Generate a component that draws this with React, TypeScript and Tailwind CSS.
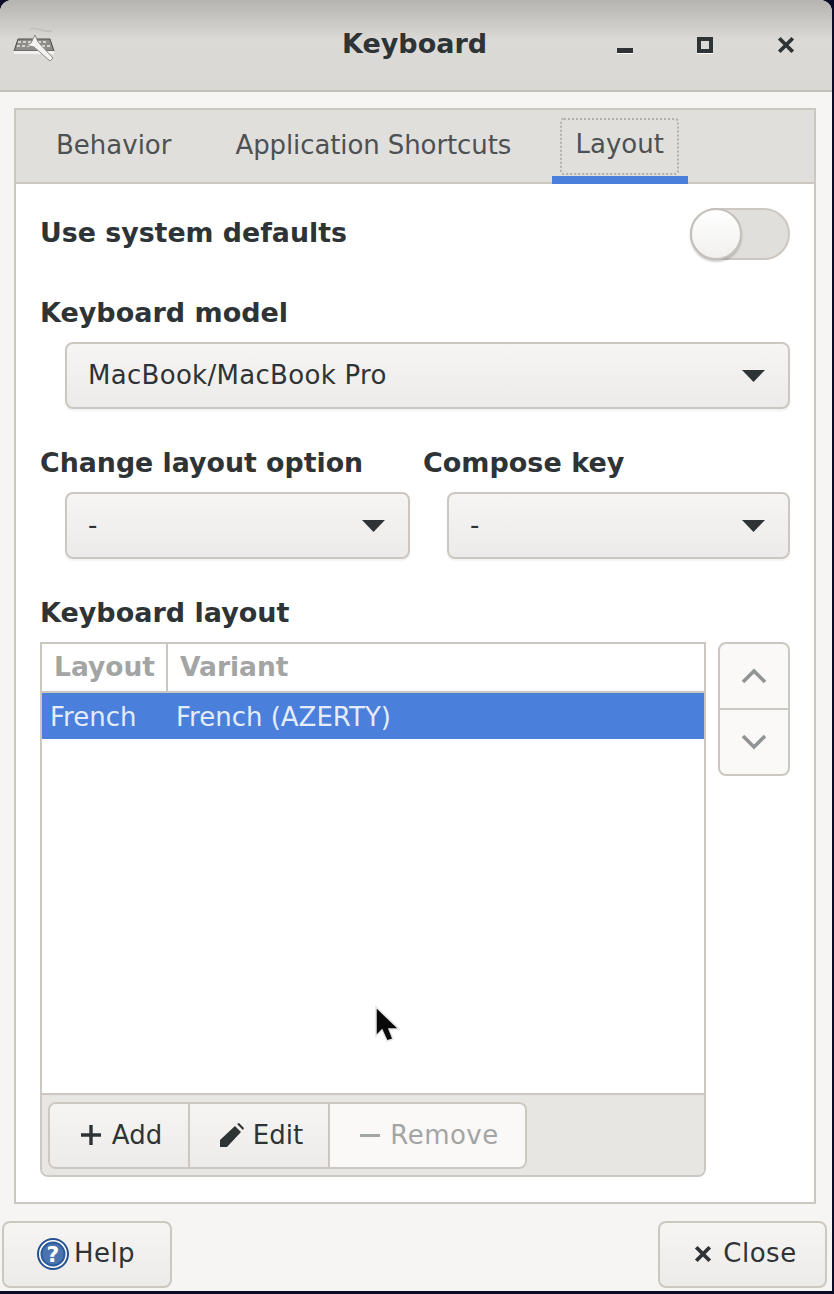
import React from 'react';

const font = { fontFamily: '"DejaVu Sans", sans-serif' };

const Caret: React.FC = () => (
  <svg width="23" height="12" viewBox="0 0 23 12" className="shrink-0">
    <path d="M0 0 H23 L11.5 12 Z" fill="#2e3436" />
  </svg>
);

const Combo: React.FC<{ label: string; className?: string }> = ({ label, className }) => (
  <div
    className={`flex h-[67px] items-center justify-between rounded-[8px] border-2 border-[#cdc7c2] bg-gradient-to-b from-[#f6f5f4] to-[#edebe9] pl-[21px] pr-[23px] shadow-[0_2px_2px_rgba(0,0,0,0.05)] ${className ?? ''}`}
  >
    <span className="text-[26px] tracking-[0.3px] text-[#2e3436]">{label}</span>
    <Caret />
  </div>
);

const KeyboardIcon: React.FC = () => (
  <svg width="44" height="40" viewBox="0 0 44 40" className="shrink-0">
    <path d="M18 4 C24 1 32 8 40 6" stroke="#c4c2be" strokeWidth="2" fill="none" />
    <path d="M6 14 H38 L42 26 H2 Z" fill="#8d8c88" stroke="#4e4e4b" strokeWidth="1" />
    <rect x="2" y="26" width="40" height="3" fill="#f2f1ef" />
    <path d="M6 17 H36 M5 21 H38" stroke="#d5d4d0" strokeWidth="2" strokeDasharray="3 2" />
    <path d="M23 10 L26 17 L41 33 L38 36 L22 22 L14 20 L19 18 Z" fill="#f4f3f1" stroke="#8a8985" strokeWidth="1" />
  </svg>
);

const HelpIcon: React.FC = () => (
  <svg width="32" height="32" viewBox="0 0 32 32" className="shrink-0">
    <circle cx="16" cy="16" r="15" fill="#fff" stroke="#26508f" strokeWidth="2" />
    <circle cx="16" cy="16" r="11.5" fill="#4a74b0" stroke="#2d5a9c" strokeWidth="2" />
    <text x="16" y="24" textAnchor="middle" fontSize="22" fontWeight="700" fill="#ffffff" fontFamily="DejaVu Sans">
      ?
    </text>
  </svg>
);

const CloseIcon: React.FC<{ size?: number }> = ({ size = 16 }) => (
  <svg width={size} height={size} viewBox="0 0 16 16" className="shrink-0">
    <path d="M2 2 L14 14 M14 2 L2 14" stroke="#2e3436" strokeWidth="3.4" />
  </svg>
);

const Tab: React.FC<{ label: string; className?: string }> = ({ label, className }) => (
  <span className={`text-[26px] text-[#4d5153] ${className ?? ''}`}>{label}</span>
);

const App: React.FC = () => {
  return (
    <div className="relative h-[1294px] w-[834px] overflow-hidden bg-[#0b0b26]" style={font}>
      <div className="flex h-[1291px] w-[832px] flex-col overflow-hidden rounded-t-[12px] bg-[#f6f5f4]">
        {/* Title bar */}
        <div className="flex h-[92px] shrink-0 items-center justify-between border-b-2 border-[#c4bfba] bg-gradient-to-b from-[#b5b4b0] via-[#dcdad7] via-[45%] to-[#dad8d4] pl-[12px]">
          <KeyboardIcon />
          <span className="absolute left-[342px] top-[24px] text-[27px] font-bold text-[#2e3436]">Keyboard</span>
          <div className="flex items-center gap-[64px] pr-[37px]">
            <span className="mt-[10px] h-[5px] w-[16px] bg-[#2e3436] shadow-[0_1px_0_#fff]" />
            <span className="h-[16px] w-[16px] border-[4px] border-[#2e3436] shadow-[0_1px_0_#fff]" />
            <CloseIcon size={18} />
          </div>
        </div>

        {/* Notebook */}
        <div className="ml-[14px] mt-[16px] flex h-[1096px] w-[802px] flex-col border-2 border-[#cdc7c2] bg-white">
          <div className="relative flex h-[74px] shrink-0 items-center border-b-2 border-[#cdc7c2] bg-[#e1dfdc] pb-[2px] pl-[40px]">
            <Tab label="Behavior" />
            <Tab label="Application Shortcuts" className="ml-[64px] tracking-[-0.1px]" />
            <div className="mb-[-1px] ml-[49px] mt-[1px] flex h-[57px] w-[119px] items-center justify-center rounded-[4px] border-2 border-dotted border-[#b3b0ac] pb-[3px]">
              <Tab label="Layout" />
            </div>
            <span className="absolute bottom-[-2px] left-[536px] h-[8px] w-[136px] bg-[#4a7fdc]" />
          </div>

          <div className="flex flex-1 flex-col px-[24px]">
            <div className="mt-[24px] flex h-[52px] items-center justify-between">
              <span className="mb-[2px] text-[26.8px] font-bold text-[#2e3436]">Use system defaults</span>
              <div className="relative h-[52px] w-[100px] rounded-full border-2 border-[#cdc7c2] bg-[#e1dfdc]">
                <span className="absolute left-[-2px] top-[-2px] h-[52px] w-[52px] rounded-full border-2 border-[#c4bfba] bg-gradient-to-b from-white to-[#f1f0ee] shadow-[0_2px_2px_rgba(0,0,0,0.2)]" />
              </div>
            </div>

            <div className="mt-[36px] text-[27px] font-bold leading-[34px] text-[#2e3436]">Keyboard model</div>
            <Combo label="MacBook/MacBook Pro" className="ml-[25px] mt-[12px] w-[725px]" />

            <div className="mt-[37px] flex">
              <div className="w-[383px]">
                <div className="text-[26.8px] font-bold leading-[34px] text-[#2e3436]">Change layout option</div>
                <Combo label="-" className="ml-[25px] mt-[12px] w-[345px]" />
              </div>
              <div>
                <div className="text-[27px] font-bold leading-[34px] text-[#2e3436]">Compose key</div>
                <Combo label="-" className="ml-[24px] mt-[12px] w-[343px]" />
              </div>
            </div>

            <div className="mt-[37px] text-[27px] font-bold leading-[34px] text-[#2e3436]">Keyboard layout</div>

            <div className="mt-[12px] flex items-start">
              <div className="flex h-[535px] w-[666px] flex-col overflow-hidden rounded-b-[8px] border-2 border-[#cdc7c2]">
                <div className="flex h-[49px] shrink-0 items-center border-b-2 border-[#cdc7c2] text-[26.5px] font-bold text-[#a3a5a5]">
                  <span className="flex h-full w-[126px] items-center border-r-2 border-[#cdc7c2] pb-[2px] pl-[12px]">Layout</span>
                  <span className="pb-[2px] pl-[12px]">Variant</span>
                </div>
                <div className="flex h-[46px] shrink-0 items-center bg-[#4a7fdc] pt-[2px] text-[26px] text-[#e4ecf9]">
                  <span className="w-[126px] pl-[8px]">French</span>
                  <span className="pl-[8px]">French (AZERTY)</span>
                </div>
                <div className="flex-1" />
                <div className="flex h-[82px] shrink-0 items-center border-t-2 border-[#cdc7c2] bg-[#e8e6e3] pl-[6px]">
                  <div className="flex h-[67px] w-[479px] overflow-hidden rounded-[8px] border-2 border-[#cdc7c2] text-[26px]">
                    <div className="flex w-[140px] items-center justify-center gap-[10px] border-r-2 border-[#cdc7c2] bg-gradient-to-b from-[#f6f5f4] to-[#edebe9] pl-[4px] text-[#2e3436]">
                      <svg width="22" height="22" viewBox="0 0 22 22" className="shrink-0">
                        <path d="M11 1 V21 M1 11 H21" stroke="#2e3436" strokeWidth="3.4" />
                      </svg>
                      Add
                    </div>
                    <div className="flex w-[140px] items-center justify-center gap-[8px] border-r-2 border-[#cdc7c2] bg-gradient-to-b from-[#f6f5f4] to-[#edebe9] pl-[4px] text-[#2e3436]">
                      <svg width="26" height="26" viewBox="0 0 26 26" className="shrink-0">
                        <path d="M1 25 V18 L16 4 L22 10 L8 25 Z M18 2 L20 1 L25 6 L24 8 Z" fill="#2e3436" />
                      </svg>
                      Edit
                    </div>
                    <div className="flex flex-1 items-center justify-center gap-[10px] bg-[#faf9f8] pl-[4px] tracking-[0.5px] text-[#a3a5a5]">
                      <span className="h-[3px] w-[20px] bg-[#a3a5a5]" />
                      Remove
                    </div>
                  </div>
                </div>
              </div>

              <div className="ml-[12px] flex h-[134px] w-[72px] flex-col overflow-hidden rounded-[8px] border-2 border-[#cdc7c2] bg-[#faf9f8]">
                <div className="flex flex-1 items-center justify-center border-b-2 border-[#cdc7c2]">
                  <svg width="26" height="16" viewBox="0 0 26 16">
                    <path d="M2 14 L13 3 L24 14" stroke="#919494" strokeWidth="3.6" fill="none" />
                  </svg>
                </div>
                <div className="flex flex-1 items-center justify-center">
                  <svg width="26" height="16" viewBox="0 0 26 16">
                    <path d="M2 2 L13 13 L24 2" stroke="#919494" strokeWidth="3.6" fill="none" />
                  </svg>
                </div>
              </div>
            </div>
          </div>
        </div>

        {/* Footer buttons */}
        <div className="mt-[17px] flex justify-between pl-[2px] pr-[5px]">
          <div className="flex h-[67px] w-[170px] items-center justify-center gap-[5px] rounded-[8px] border-2 border-[#cdc7c2] bg-gradient-to-b from-[#f6f5f4] to-[#edebe9] pb-[2px] pr-[2px] text-[26px] tracking-[0.4px] text-[#2e3436]">
            <HelpIcon />
            Help
          </div>
          <div className="flex h-[67px] w-[169px] items-center justify-center gap-[11px] rounded-[8px] border-2 border-[#cdc7c2] bg-gradient-to-b from-[#f6f5f4] to-[#edebe9] pb-[2px] pl-[6px] text-[26px] tracking-[0.5px] text-[#2e3436]">
            <CloseIcon size={18} />
            Close
          </div>
        </div>
      </div>

      {/* Pointer */}
      <svg width="28" height="40" viewBox="0 0 28 40" className="absolute left-[374px] top-[1005px]">
        <path d="M2 2 V31 L8 25 L13 36 L19 34 L15 24 L25 24 Z" fill="#0a0a0a" stroke="#e4e4e4" strokeWidth="1.5" />
      </svg>
    </div>
  );
};

export default App;
